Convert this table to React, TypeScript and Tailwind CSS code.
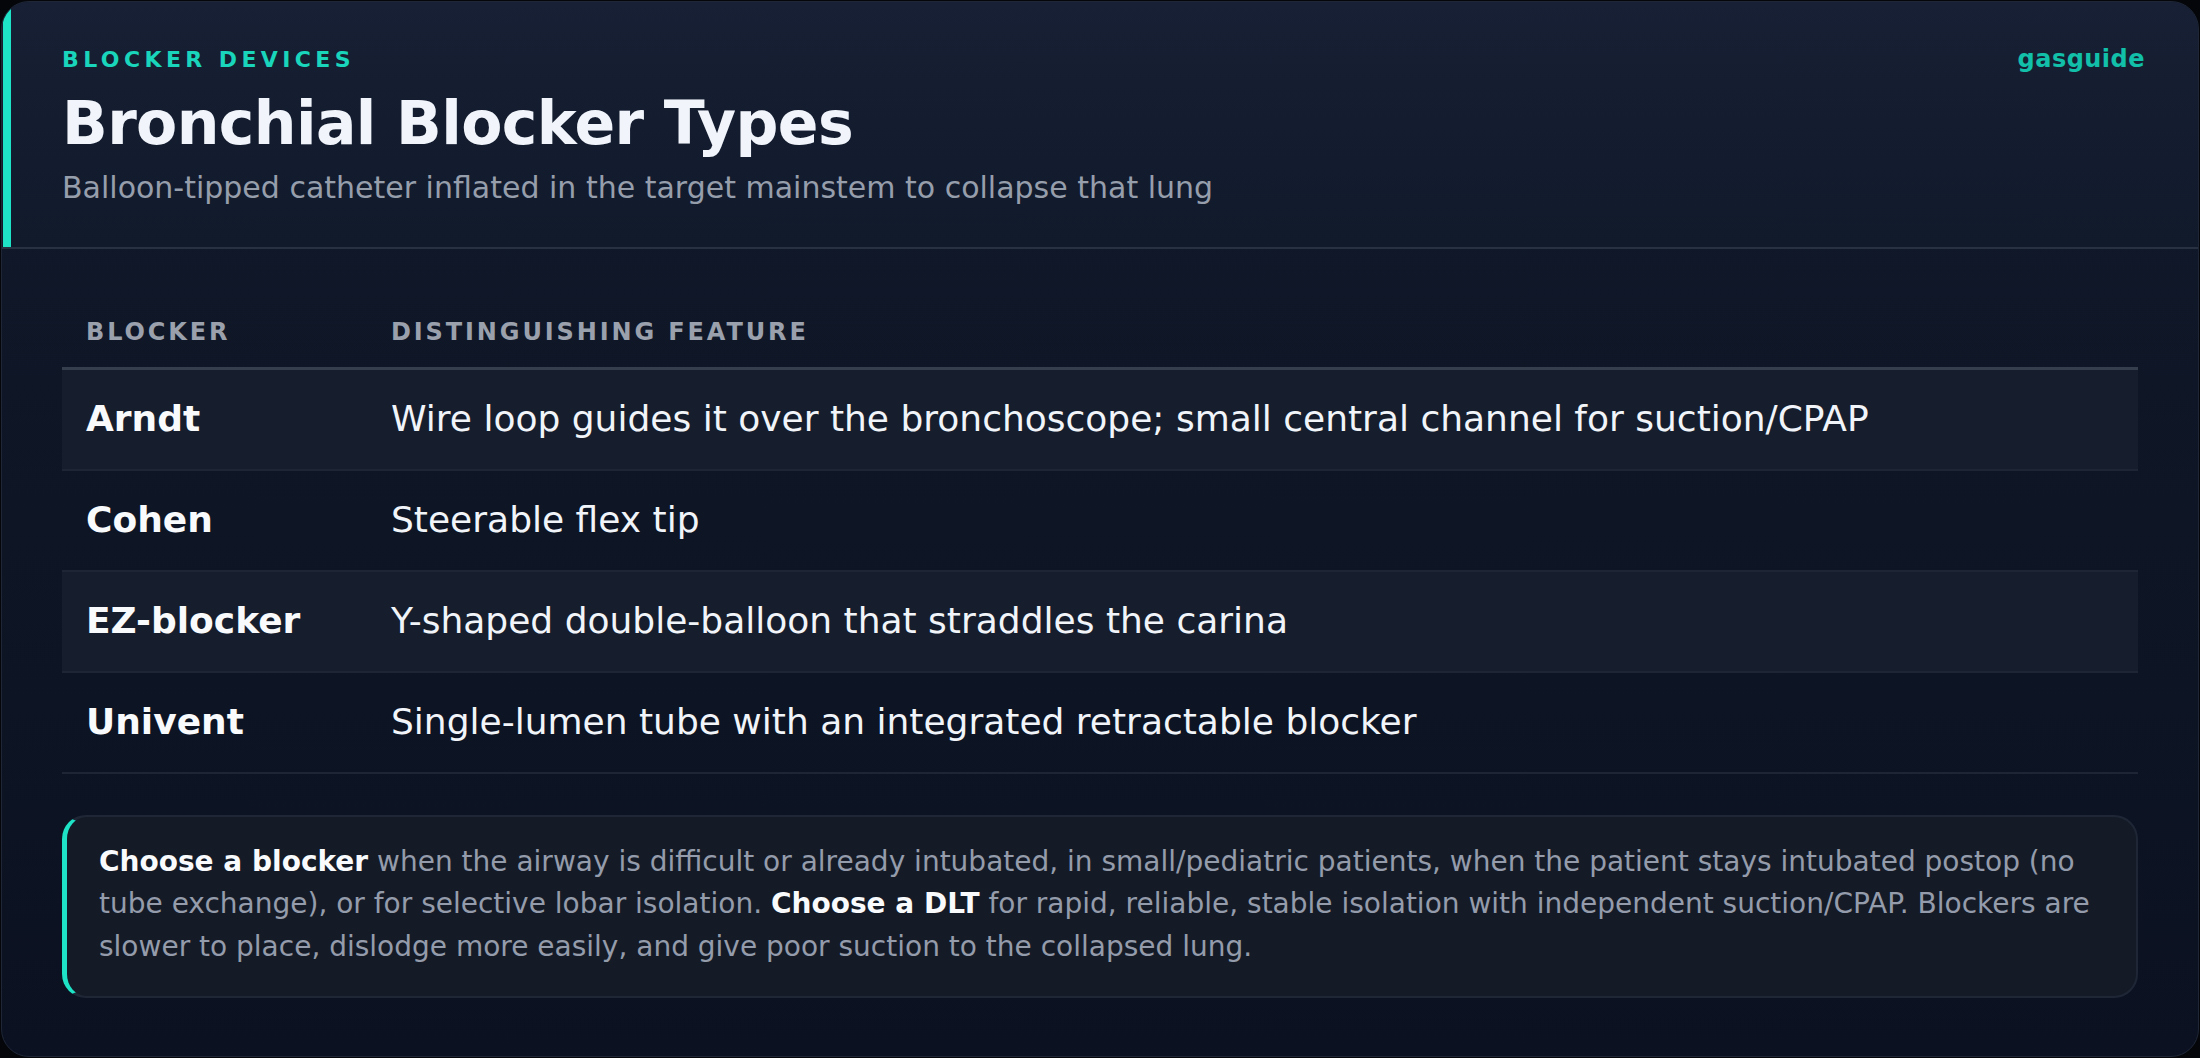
const rows = [
  {
    name: "Arndt",
    feature:
      "Wire loop guides it over the bronchoscope; small central channel for suction/CPAP",
  },
  { name: "Cohen", feature: "Steerable flex tip" },
  { name: "EZ-blocker", feature: "Y-shaped double-balloon that straddles the carina" },
  {
    name: "Univent",
    feature: "Single-lumen tube with an integrated retractable blocker",
  },
];

export default function App() {
  return (
    <div className="min-h-screen bg-[#04060a] p-px font-['DejaVu_Sans',_'Liberation_Sans',_sans-serif]">
      <div className="relative h-[1056px] overflow-hidden rounded-[28px] border border-[#1f2737] bg-gradient-to-b from-[#111a2b] to-[#0b1120]">
        {/* header */}
        <header className="relative border-b-2 border-[#283142] bg-gradient-to-b from-[#172034] to-[#111a2b] pb-[44px] pl-[60px] pr-[53px] pt-[45px]">
          <span
            className="absolute bottom-0 left-[1px] top-0 w-[8px] bg-[#1ee3c6]"
            aria-hidden
          />
          <div className="flex items-baseline justify-between">
            <p className="text-[22px] font-bold uppercase leading-[22px] tracking-[0.2em] text-[#19d5bb]">
              Blocker Devices
            </p>
            <p className="text-[24px] font-bold leading-[24px] tracking-[0.02em] text-[#12bfa9]">
              gasguide
            </p>
          </div>
          <h1 className="mt-[22px] text-[60px] font-bold leading-[60px] tracking-[-0.01em] text-[#f1f5fb]">
            Bronchial Blocker Types
          </h1>
          <p className="mt-[20px] text-[30px] leading-[30px] text-[#969eac]">
            Balloon-tipped catheter inflated in the target mainstem to collapse that lung
          </p>
        </header>

        {/* table */}
        <div className="px-[60px] pt-[71px]">
          <table className="w-full border-collapse text-left">
            <thead>
              <tr className="border-b-[3px] border-[#353e4d]">
                <th className="w-[305px] pb-[23px] pl-[24px] text-[24px] font-bold uppercase leading-[24px] tracking-[0.12em] text-[#9aa1ad]">
                  Blocker
                </th>
                <th className="pb-[23px] pl-[24px] text-[24px] font-bold uppercase leading-[24px] tracking-[0.12em] text-[#9aa1ad]">
                  Distinguishing Feature
                </th>
              </tr>
            </thead>
            <tbody>
              {rows.map((r, i) => (
                <tr
                  key={r.name}
                  className={
                    i % 2 === 0
                      ? "border-b-2 border-[#1e2636] bg-[#161e2d]"
                      : "border-b-2 border-[#1e2636]"
                  }
                >
                  <td className="h-[101px] pl-[24px] text-[36px] font-bold text-[#f8fafc]">
                    {r.name}
                  </td>
                  <td className="h-[101px] pl-[24px] text-[36px] text-[#f1f5f9]">
                    {r.feature}
                  </td>
                </tr>
              ))}
            </tbody>
          </table>

          {/* note */}
          <div className="mt-[41px] rounded-[24px] border-2 border-l-[5px] border-[#1f2736] border-l-[#1ee3c6] bg-[#141b27] pb-[28px] pl-[32px] pr-[40px] pt-[24px]">
            <p className="text-[28px] leading-[42.5px] text-[#949cab]">
              <strong className="font-bold text-[#f8fafc]">Choose a blocker</strong> when
              the airway is difficult or already intubated, in small/pediatric patients,
              when the patient stays intubated postop (no tube exchange), or for selective
              lobar isolation. <strong className="font-bold text-[#f8fafc]">Choose a DLT</strong>{" "}
              for rapid, reliable, stable isolation with independent suction/CPAP. Blockers
              are slower to place, dislodge more easily, and give poor suction to the
              collapsed lung.
            </p>
          </div>
        </div>
      </div>
    </div>
  );
}
